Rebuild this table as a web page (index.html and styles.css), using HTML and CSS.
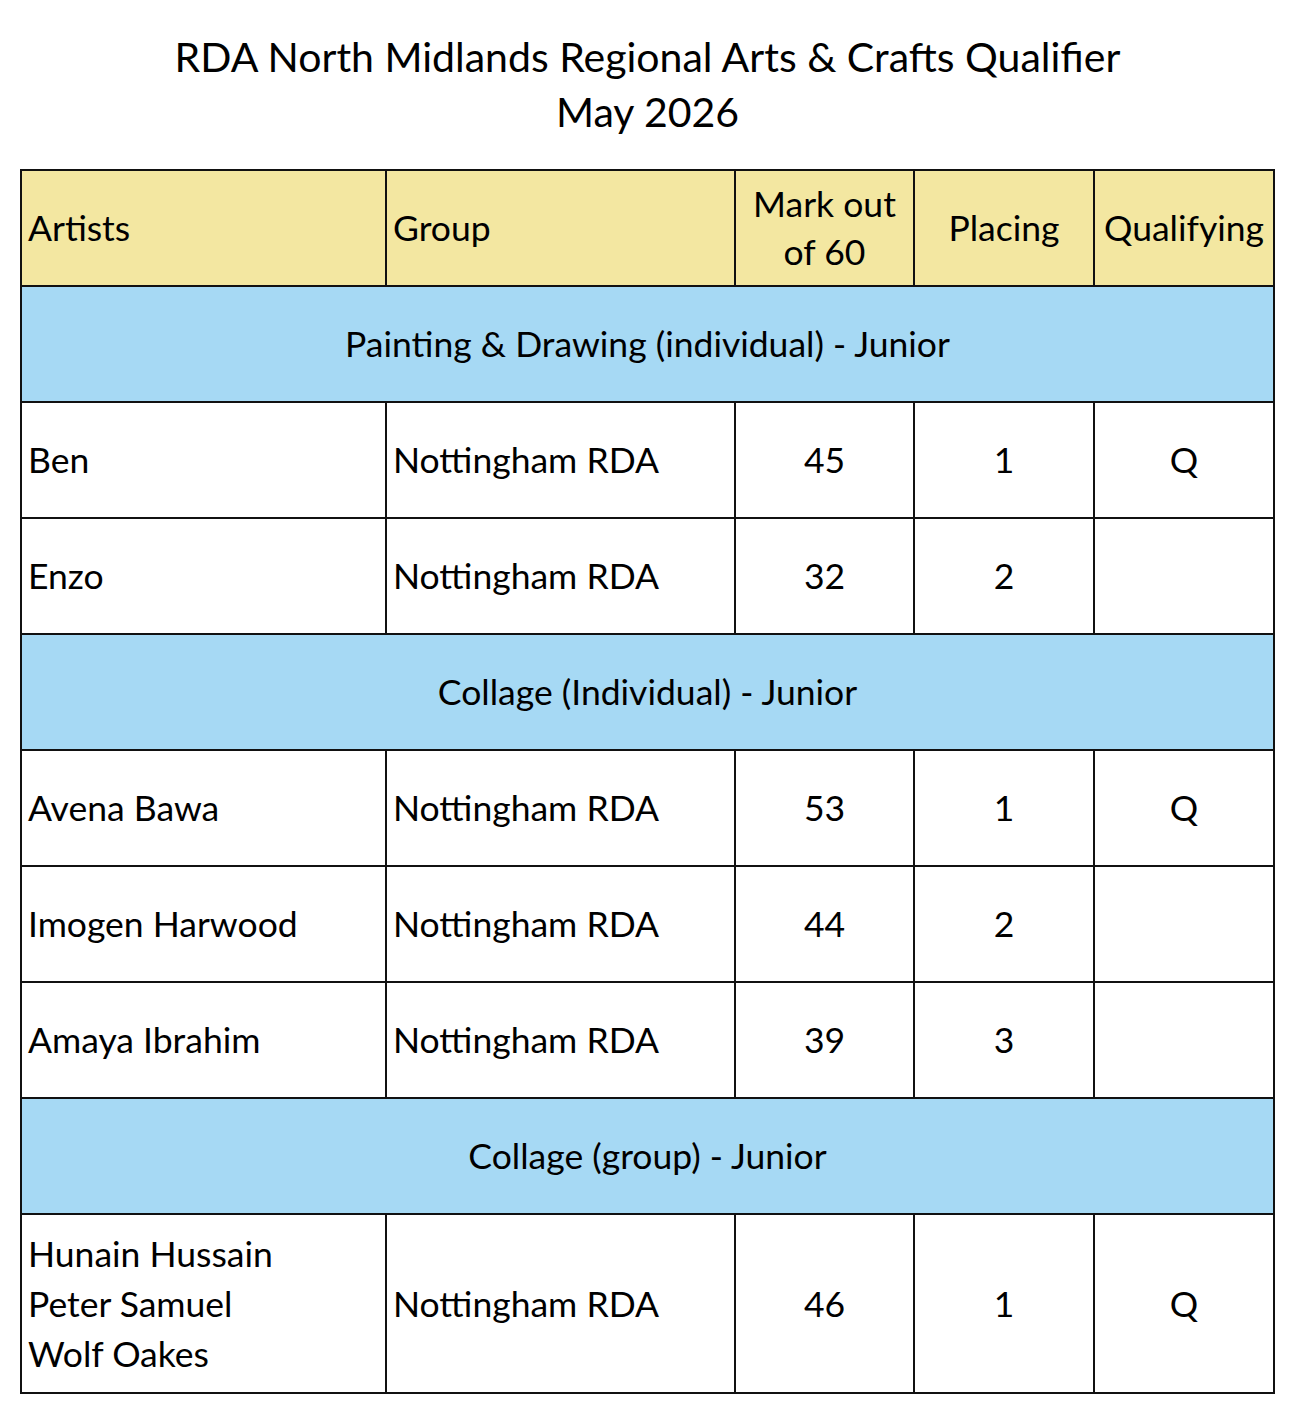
FILE: index.html
```html
<!DOCTYPE html>
<html lang="en">
<head>
<meta charset="utf-8">
<title>RDA North Midlands Regional Arts &amp; Crafts Qualifier</title>
<link rel="stylesheet" href="styles.css">
</head>
<body>
<h1 class="title">RDA North Midlands Regional Arts &amp; Crafts Qualifier<br>May 2026</h1>
<table class="results">
  <colgroup>
    <col class="c-artist"><col class="c-group"><col class="c-mark"><col class="c-place"><col class="c-q">
  </colgroup>
  <thead>
    <tr class="head">
      <th class="left">Artists</th>
      <th class="left">Group</th>
      <th>Mark out<br>of 60</th>
      <th>Placing</th>
      <th>Qualifying</th>
    </tr>
  </thead>
  <tbody>
    <tr class="section"><td colspan="5">Painting &amp; Drawing (individual) - Junior</td></tr>
    <tr><td class="left">Ben</td><td class="left">Nottingham RDA</td><td>45</td><td>1</td><td>Q</td></tr>
    <tr><td class="left">Enzo</td><td class="left">Nottingham RDA</td><td>32</td><td>2</td><td></td></tr>
    <tr class="section"><td colspan="5">Collage (Individual) - Junior</td></tr>
    <tr><td class="left">Avena Bawa</td><td class="left">Nottingham RDA</td><td>53</td><td>1</td><td>Q</td></tr>
    <tr><td class="left">Imogen Harwood</td><td class="left">Nottingham RDA</td><td>44</td><td>2</td><td></td></tr>
    <tr><td class="left">Amaya Ibrahim</td><td class="left">Nottingham RDA</td><td>39</td><td>3</td><td></td></tr>
    <tr class="section"><td colspan="5">Collage (group) - Junior</td></tr>
    <tr class="tall"><td class="left">Hunain Hussain<br>Peter Samuel<br>Wolf Oakes</td><td class="left">Nottingham RDA</td><td>46</td><td>1</td><td>Q</td></tr>
  </tbody>
</table>
</body>
</html>
```

FILE: styles.css
```css
html, body {
  margin: 0;
  padding: 0;
  background: #ffffff;
}
body {
  font-family: Lato, "Open Sans", sans-serif;
  color: #000;
  padding: 29px 0 0 20px;
}
.title {
  margin: 0 0 30px 0;
  width: 1255px;
  text-align: center;
  font-weight: normal;
  font-size: 41px;
  line-height: 55px;
}
.results {
  border-collapse: collapse;
  width: 1255px;
  table-layout: fixed;
  font-size: 35.5px;
  line-height: 48px;
}
.c-artist { width: 365px; }
.c-group { width: 349px; }
.c-mark { width: 179px; }
.c-place { width: 180px; }
.c-q { width: 180px; }
.results th, .results td {
  border: 2px solid #111;
  text-align: center;
  vertical-align: middle;
  font-weight: normal;
  padding: 0 6px;
  height: 114px;
}
.results .left {
  text-align: left;
}
.head th {
  background: #f3e7a1;
}
.section td {
  background: #a6d9f4;
}
.tall td {
  height: 177px;
  line-height: 50px;
}
```
